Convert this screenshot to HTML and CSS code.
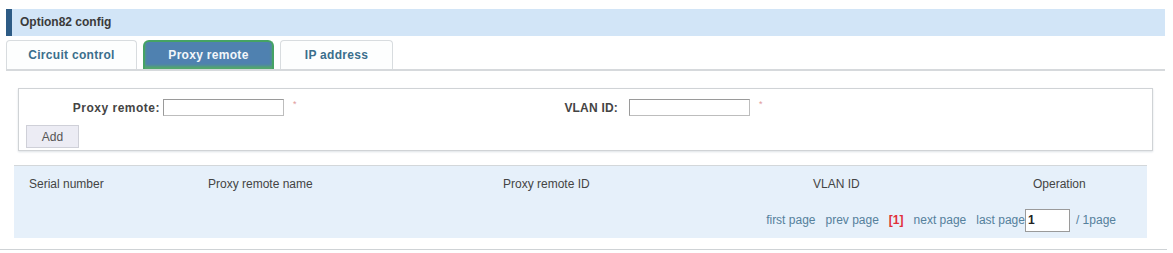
FILE: index.html
```html
<!DOCTYPE html>
<html>
<head>
<meta charset="utf-8">
<link rel="stylesheet" href="styles.css">
</head>
<body>
<div class="wrap">
  <div class="title">Option82 config</div>
  <div class="tabs">
    <div class="tab tab-circuit">Circuit control</div>
    <div class="tab tab-active">Proxy remote</div>
    <div class="tab tab-ip">IP address</div>
  </div>
  <div class="formbox">
    <div class="formrow">
      <span class="label label1">Proxy remote:</span>
      <input class="txt" type="text">
      <span class="star star1">*</span>
      <span class="label label2">VLAN ID:</span>
      <input class="txt txt2" type="text">
      <span class="star">*</span>
    </div>
    <button class="addbtn">Add</button>
  </div>
  <div class="tablebox">
    <div class="thead">
      <span>Serial number</span>
      <span>Proxy remote name</span>
      <span>Proxy remote ID</span>
      <span>VLAN ID</span>
      <span>Operation</span>
    </div>
    <div class="pager">
      <span class="plink">first page</span>
      <span class="plink">prev page</span>
      <span class="pcur">[1]</span>
      <span class="plink">next page</span>
      <span class="plink last">last page</span>
      <input class="pinput" type="text" value="1">
      <span class="ptotal">/ 1page</span>
    </div>
  </div>
</div>
<div class="bottomline"></div>
</body>
</html>
```
FILE: styles.css
```css
html, body {
  margin: 0;
  padding: 0;
  background: #ffffff;
  font-family: "Liberation Sans", Arial, sans-serif;
  font-size: 12px;
  color: #444;
}
.wrap {
  padding: 9px 8px 0 6px;
  width: 1159px;
}
.title {
  height: 27px;
  line-height: 27px;
  background: #d2e5f7;
  border-left: 6px solid #2d5b85;
  padding-left: 8px;
  font-weight: bold;
  color: #3a3a3a;
}
.tabs {
  display: flex;
  gap: 6px;
  margin-top: 4px;
  height: 29px;
  border-bottom: 2px solid #d6d9dc;
}
.tab {
  box-sizing: border-box;
  height: 29px;
  line-height: 28px;
  text-align: center;
  font-weight: bold;
  color: #3b6e8c;
  background: #fdfefe;
  border: 1px solid #d8dcdf;
  border-bottom: none;
  border-radius: 4px 4px 0 0;
  letter-spacing: 0.3px;
}
.tab-circuit { width: 131px; }
.tab-active {
  width: 131px;
  color: #f2f6fa;
  background: #4f81b0;
  border: 2px solid #45a364;
  border-bottom: none;
  border-radius: 6px 6px 0 0;
  box-shadow: inset 0 -3px 3px #52a86a;
  line-height: 26px;
}
.tab-ip { width: 113px; }
.formbox {
  margin: 17px 12px 0 12px;
  height: 61px;
  border: 1px solid #d0d3d6;
  box-shadow: 0 1px 2px #dde2e6;
  background: #fff;
}
.formrow {
  display: flex;
  align-items: center;
  height: 17px;
  margin-top: 10px;
}
.label {
  font-weight: bold;
  color: #444;
  text-align: right;
}
.label1 { width: 141px; letter-spacing: 0.5px; }
.label2 { width: 64px; letter-spacing: 0.2px; }
.txt {
  box-sizing: border-box;
  width: 121px;
  height: 17px;
  margin: 0 0 0 3px;
  padding: 0;
  border: 1px solid #bdbdbd;
  border-top-color: #9a9a9a;
  border-left-color: #9a9a9a;
  background: #fff;
}
.txt2 { margin-left: 11px; }
.star {
  color: #e09a9a;
  font-size: 9px;
  margin-left: 9px;
  align-self: flex-start;
}
.star1 { width: 261px; }
.addbtn {
  display: block;
  box-sizing: border-box;
  margin: 9px 0 0 7px;
  width: 53px;
  height: 23px;
  padding: 0;
  background: #ececf4;
  border: 1px solid #cfd0d8;
  font-family: "Liberation Sans", Arial, sans-serif;
  font-size: 12px;
  color: #555;
}
.tablebox {
  margin: 14px 18px 0 8px;
  border-top: 1px solid #d3d7da;
  background: #e6f0fa;
  height: 72px;
}
.thead {
  display: grid;
  grid-template-columns: 179px 295px 310px 220px auto;
  padding-left: 15px;
  height: 36px;
  line-height: 36px;
  color: #444;
}
.pager {
  display: flex;
  justify-content: flex-end;
  align-items: center;
  height: 36px;
  padding-right: 31px;
  color: #55809c;
}
.plink { margin-right: 10px; }
.plink.last { margin-right: 0; }
.pcur {
  color: #e0303a;
  font-weight: bold;
  margin-right: 10px;
}
.pinput {
  box-sizing: border-box;
  width: 45px;
  height: 23px;
  margin: 0 6px 0 0;
  padding: 0 2px;
  border: 1px solid #9a9a9a;
  font-family: "Liberation Sans", Arial, sans-serif;
  font-size: 12px;
  font-weight: bold;
  color: #222;
  background: #fff;
}
.bottomline {
  margin-top: 11px;
  width: 1167px;
  height: 1px;
  background: #cfd3d6;
}
```
